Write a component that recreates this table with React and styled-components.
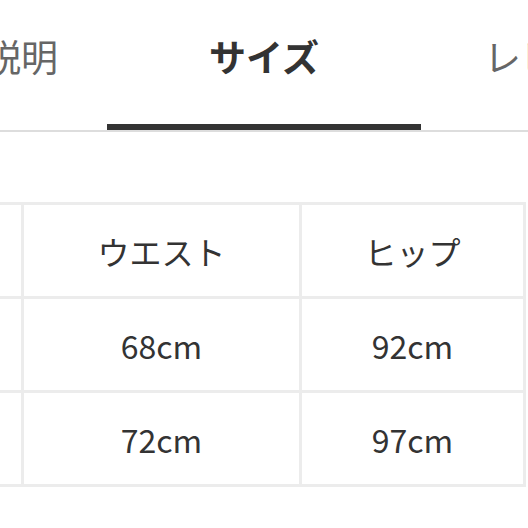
import React from "react";
import styled, { createGlobalStyle } from "styled-components";

const Global = createGlobalStyle`
  html, body {
    margin: 0;
    padding: 0;
    background: #ffffff;
    overflow: hidden;
  }
  body {
    font-family: "Noto Sans CJK JP", "Noto Sans", sans-serif;
    color: #333333;
  }
`;

const Page = styled.div`
  width: 900px;
  margin-left: -203px;
`;

const TabBar = styled.div`
  display: flex;
  padding-left: 64px;
  border-bottom: 2px solid #dddddd;
`;

const Tab = styled.div`
  position: relative;
  flex: 0 0 ${(p) => p.$w}px;
  display: flex;
  justify-content: center;
  height: 130px;
  padding-top: 38px;
  box-sizing: border-box;
  font-size: 37px;
  line-height: 37px;
  font-weight: ${(p) => (p.$active ? 700 : 400)};
  color: ${(p) => (p.$active ? "#333333" : "#666666")};
  white-space: nowrap;
`;

const Indicator = styled.span`
  position: absolute;
  left: 0;
  right: 0;
  bottom: 0;
  height: 6px;
  background: #333333;
`;

const Table = styled.div`
  margin-top: 70px;
  width: 729px;
  display: grid;
  grid-template-columns: 221px 275px 221px;
  grid-auto-rows: 91px;
  gap: 3px;
  padding: 3px;
  box-sizing: border-box;
  background: #ececec;
`;

const Cell = styled.div`
  background: #ffffff;
  display: flex;
  align-items: center;
  justify-content: center;
  font-size: 32px;
  color: #333333;
`;

const tabs = [
  { label: "商品説明", w: 246 },
  { label: "サイズ", w: 314, active: true },
  { label: "レビュー", w: 274 },
];

const rows = [
  ["サイズ", "ウエスト", "ヒップ"],
  ["S", "68cm", "92cm"],
  ["M", "72cm", "97cm"],
];

export default function App() {
  return (
    <>
      <Global />
      <Page>
        <TabBar>
          {tabs.map((t) => (
            <Tab key={t.label} $w={t.w} $active={t.active}>
              {t.label}
              {t.active && <Indicator />}
            </Tab>
          ))}
        </TabBar>
        <Table>
          {rows.map((r, i) =>
            r.map((c, j) => <Cell key={`${i}-${j}`}>{c}</Cell>)
          )}
        </Table>
      </Page>
    </>
  );
}
